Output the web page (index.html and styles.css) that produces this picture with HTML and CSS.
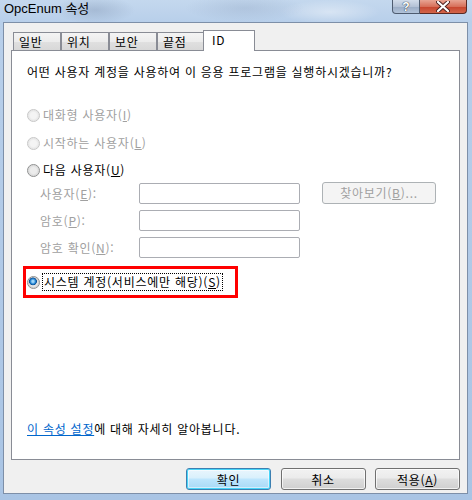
FILE: index.html
```html
<!DOCTYPE html>
<html lang="ko">
<head>
<meta charset="utf-8">
<title>OpcEnum 속성</title>
<link rel="stylesheet" href="styles.css">
</head>
<body>
<div class="window">
  <div class="titlebar">
    <span class="title">OpcEnum 속성</span>
    <div class="caption-buttons">
      <span class="cap help">?</span>
      <span class="cap close">
        <svg width="14" height="11" viewBox="0 0 14 11"><path d="M2 1 L12 10 M12 1 L2 10" stroke="#4a2020" stroke-width="4" stroke-linecap="round"/><path d="M2 1 L12 10 M12 1 L2 10" stroke="#ffffff" stroke-width="2.2" stroke-linecap="round"/></svg>
      </span>
    </div>
  </div>
  <div class="client">
    <div class="tabs">
      <span class="tab">일반</span>
      <span class="tab">위치</span>
      <span class="tab">보안</span>
      <span class="tab">끝점</span>
      <span class="tab active">ID</span>
    </div>
    <div class="panel">
      <p class="question">어떤 사용자 계정을 사용하여 이 응용 프로그램을 실행하시겠습니까?</p>
      <div class="radio disabled r1"><span class="dot"></span><span>대화형 사용자(<u>I</u>)</span></div>
      <div class="radio disabled r2"><span class="dot"></span><span>시작하는 사용자(<u>L</u>)</span></div>
      <div class="radio r3"><span class="dot"></span><span>다음 사용자(<u>U</u>)</span></div>
      <div class="fields">
        <div class="frow">
          <span class="flabel">사용자(<u>E</u>):</span>
          <span class="input"></span>
          <span class="browse">찾아보기(<u>B</u>)...</span>
        </div>
        <div class="frow">
          <span class="flabel">암호(<u>P</u>):</span>
          <span class="input"></span>
        </div>
        <div class="frow">
          <span class="flabel">암호 확인(<u>N</u>):</span>
          <span class="input"></span>
        </div>
      </div>
      <div class="highlight">
        <div class="radio checked"><span class="dot"></span><span class="focus">시스템 계정(서비스에만 해당)(<u>S</u>)</span></div>
      </div>
      <p class="more"><a class="link">이 속성 설정</a>에 대해 자세히 알아봅니다.</p>
    </div>
    <div class="buttons">
      <span class="btn default">확인</span>
      <span class="btn">취소</span>
      <span class="btn">적용(<u>A</u>)</span>
    </div>
  </div>
</div>
</body>
</html>
```

FILE: styles.css
```css
* { box-sizing: border-box; }
html, body { margin: 0; padding: 0; }
body {
  width: 472px;
  height: 500px;
  overflow: hidden;
  font-family: "Noto Sans CJK KR", "Noto Sans", sans-serif;
  font-size: 12px;
  letter-spacing: 0.75px;
  color: #000;
}
.window {
  width: 472px;
  height: 500px;
  display: flex;
  flex-direction: column;
  background:
    radial-gradient(ellipse 40px 14px at 95px 10px, rgba(120,140,170,0.35), transparent),
    radial-gradient(ellipse 60px 14px at 245px 8px, rgba(130,150,180,0.25), transparent),
    radial-gradient(ellipse 50px 12px at 330px 12px, rgba(255,255,255,0.4), transparent),
    linear-gradient(180deg, #c4d8ee 0px, #b8cfea 22px, #a9c4e4 100%);
}
.titlebar {
  height: 22px;
  display: flex;
  justify-content: space-between;
  align-items: flex-start;
  flex: none;
}
.title {
  font-family: "Liberation Sans", "Noto Sans CJK KR", sans-serif;
  font-size: 13px;
  letter-spacing: 0;
  line-height: 18px;
  padding-left: 4px;
  color: #000;
}
.caption-buttons {
  display: flex;
  margin-right: 5px;
}
.cap {
  height: 14px;
  display: flex;
  align-items: center;
  justify-content: center;
  border: 1px solid #4e5c70;
  border-top: none;
}
.help {
  width: 28px;
  border-radius: 0 0 0 4px;
  background: linear-gradient(180deg, #d2dcea 0%, #b4c2d6 50%, #9aabc4 51%, #b2c4da 100%);
  font-family: "Liberation Sans", sans-serif;
  font-weight: bold;
  font-size: 12px;
  letter-spacing: 0;
  color: #fff;
  text-shadow: 0 0 1px #2a3442, 0 0 1px #2a3442;
  line-height: 12px;
}
.close {
  width: 47px;
  border-left: none;
  border-radius: 0 0 4px 0;
  background: linear-gradient(180deg, #e8a493 0%, #d7705a 50%, #c7432c 51%, #d2654a 100%);
  border-color: #5a2a24;
}
.close svg { display: block; }
.client {
  height: 472px;
  margin: 0 4px 0 3px;
  background: #f0f0f0;
  border: 1px solid #7d8fa8;
  padding: 7px 7px 0 7px;
  display: flex;
  flex-direction: column;
  flex: none;
}
.tabs {
  display: flex;
  align-items: flex-end;
  height: 20px;
  padding-left: 2px;
  position: relative;
  z-index: 1;
}
.tab {
  width: 48px;
  height: 18px;
  border: 1px solid #898c95;
  border-bottom: none;
  background: linear-gradient(180deg, #f4f4f4 0%, #ececec 50%, #e0e0e0 51%, #d8d8d8 100%);
  padding-left: 5px;
  line-height: 17px;
}
.tab.active {
  width: 52px;
  height: 21px;
  margin-left: -2px;
  margin-bottom: -1px;
  background: #fff;
  padding-left: 8px;
  line-height: 17px;
}
.panel {
  height: 410px;
  background: #fff;
  border: 1px solid #898c95;
  display: flex;
  flex-direction: column;
  padding: 0 0 0 15px;
}
.question {
  margin: 13px 0 0 0;
  line-height: 16px;
  height: 16px;
  white-space: nowrap;
}
.radio {
  display: flex;
  align-items: center;
  height: 16px;
  line-height: 16px;
  white-space: nowrap;
}
.r1 { margin-top: 27px; }
.r2 { margin-top: 12px; }
.r3 { margin-top: 11px; }
.dot {
  width: 13px;
  height: 13px;
  border-radius: 50%;
  border: 1px solid #8e8f8f;
  background: radial-gradient(circle at 50% 50%, #ececec 0 3px, #dcdcdc 5px, #f4f4f4 6px);
  margin-right: 3px;
  flex: none;
}
.radio.disabled { color: #a0a0a0; }
.radio.disabled .dot {
  border-color: #c7c7c7;
  background: radial-gradient(circle at 50% 50%, #f4f4f4 0 3px, #e8e8e8 5px, #f6f6f6 6px);
}
.radio.checked .dot {
  background:
    radial-gradient(circle at 45% 40%, #9fd6f8 0 1px, #2a8ad8 2.5px, #0b4f92 3.6px, transparent 4.2px),
    radial-gradient(circle at 50% 50%, #e6e6e6 0 4px, #d2d2d2 5px, #f4f4f4 6px);
}
.fields {
  display: flex;
  flex-direction: column;
  gap: 6px;
  margin: 5px 0 0 13px;
}
.frow {
  display: flex;
  align-items: center;
  height: 21px;
}
.flabel {
  width: 99px;
  flex: none;
  color: #a0a0a0;
  white-space: nowrap;
  line-height: 16px;
}
.input {
  width: 161px;
  height: 21px;
  flex: none;
  border: 1px solid #abadb3;
  border-radius: 2px;
  background: #fff;
}
.browse {
  width: 114px;
  height: 22px;
  flex: none;
  margin: -2px 0 0 22px;
  border: 1px solid #adb2b5;
  border-radius: 3px;
  background: #f4f4f4;
  color: #a0a0a0;
  display: flex;
  align-items: center;
  justify-content: center;
}
.highlight {
  margin: 8px 0 0 -4px;
  width: 215px;
  height: 32px;
  border: 3px solid #ff0000;
  padding: 5px 0 0 1px;
}
.focus {
  outline: 1px dotted #000;
  padding: 0 1px;
}
.more {
  margin: auto 0 22px 0;
  line-height: 16px;
  white-space: nowrap;
}
.link {
  color: #0066cc;
  text-decoration: underline;
}
.buttons {
  display: flex;
  justify-content: flex-end;
  gap: 9.5px;
  margin-top: 8px;
}
.btn {
  width: 85px;
  height: 22px;
  border: 1px solid #707070;
  border-radius: 3px;
  background: linear-gradient(180deg, #f2f2f2 0%, #ebebeb 45%, #dddddd 50%, #cfcfcf 100%);
  display: flex;
  align-items: center;
  justify-content: center;
  box-shadow: inset 0 0 0 1px rgba(255,255,255,0.7);
}
.btn.default {
  border-color: #3c7fb1;
  background: linear-gradient(180deg, #eaf6fd 0%, #d9f0fc 45%, #bee6fd 50%, #a7d9f5 100%);
  box-shadow: inset 0 0 0 1px #48d5f8, inset 0 0 0 2px rgba(255,255,255,0.5);
}
```
